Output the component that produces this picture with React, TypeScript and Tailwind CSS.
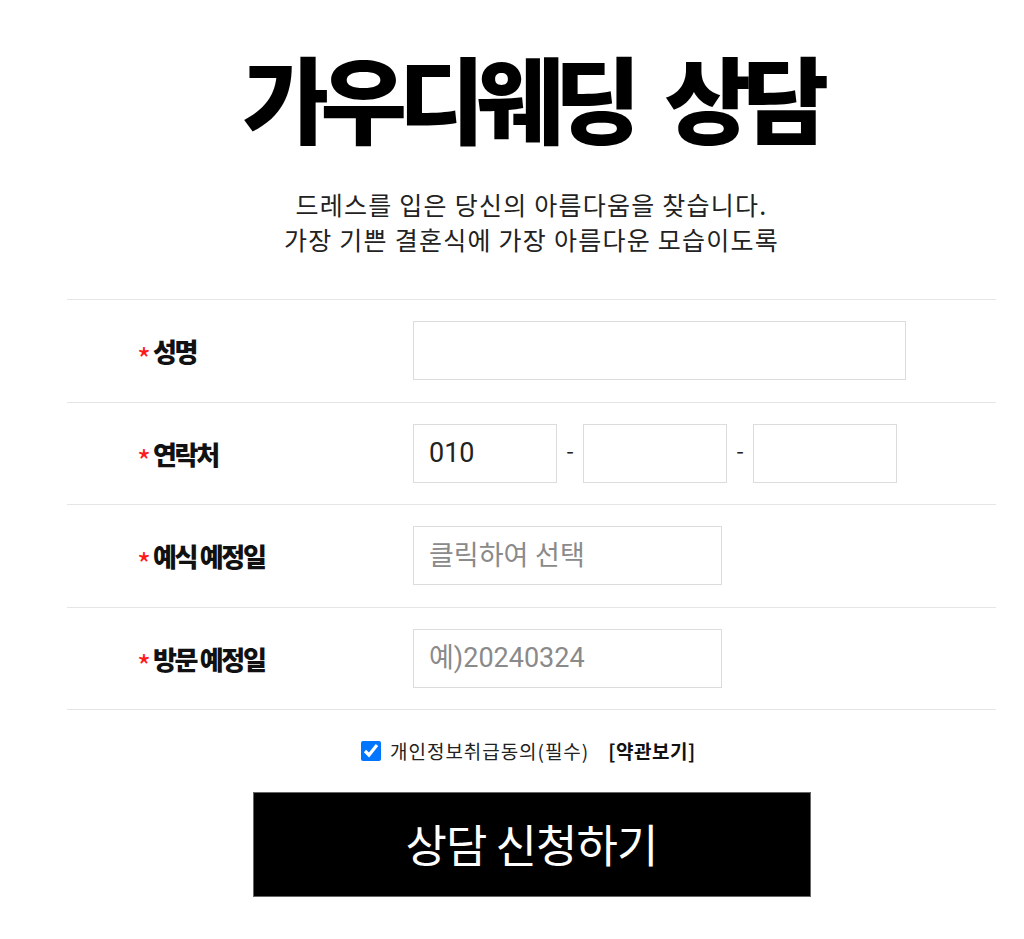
import React from "react";

const KR = { fontFamily: '"Noto Sans CJK KR", "Noto Sans", sans-serif' };
const INPUT_FONT = { fontFamily: 'Roboto, "Noto Sans CJK KR", sans-serif' };

const Label = ({ children }: { children: React.ReactNode }) => (
  <div className="flex items-center pl-[70px] w-[346px] shrink-0">
    <span className="text-[#ff1a1a] text-[30px] mr-[2px] leading-none h-[20px] mt-[4px]">*</span>
    <span className="text-[26px] font-black tracking-[-0.09em] text-[#111]">{children}</span>
  </div>
);

const Row = ({ label, children }: { label: string; children: React.ReactNode }) => (
  <div className="flex items-center h-[102.5px] border-b border-[#e5e5e5]">
    <Label>{label}</Label>
    <div className="flex items-center">{children}</div>
  </div>
);

const inputCls =
  "h-[59px] border border-[#dcdcdc] px-[15px] text-[27px] text-[#222] placeholder:text-[#8a8a8a] outline-none bg-white";

export default function App() {
  return (
    <div className="bg-white min-h-[939px] w-full" style={KR}>
      <div className="ml-[67px] w-[929px]">
        <h1 className="text-center pt-[41px] text-[94px] leading-[110px] font-black tracking-[-0.09em] [word-spacing:0.2em] text-black">
          가우디웨딩 상담
        </h1>
        <p className="text-center mt-[36px] text-[25px] leading-[35px] tracking-[0.05em] text-[#222]">
          드레스를 입은 당신의 아름다움을 찾습니다.
          <br />
          가장 기쁜 결혼식에 가장 아름다운 모습이도록
        </p>

        <div className="mt-[42px] border-t border-[#e5e5e5]">
          <Row label="성명">
            <input className={`${inputCls} w-[493px]`} style={INPUT_FONT} />
          </Row>
          <Row label="연락처">
            <input className={`${inputCls} w-[144px]`} style={INPUT_FONT} defaultValue="010" />
            <span className="w-[26px] text-center text-[22px] text-[#222] mb-[8px]">-</span>
            <input className={`${inputCls} w-[144px]`} style={INPUT_FONT} />
            <span className="w-[26px] text-center text-[22px] text-[#222] mb-[8px]">-</span>
            <input className={`${inputCls} w-[144px]`} style={INPUT_FONT} />
          </Row>
          <Row label="예식 예정일">
            <input className={`${inputCls} w-[309px]`} style={INPUT_FONT} placeholder="클릭하여 선택" />
          </Row>
          <Row label="방문 예정일">
            <input className={`${inputCls} w-[309px]`} style={INPUT_FONT} placeholder="예)20240324" />
          </Row>
        </div>

        <div className="flex items-center justify-center mt-[27px] pr-[6px]">
          <input type="checkbox" defaultChecked className="w-[20px] h-[20px] m-0 accent-[#0075ff]" />
          <span className="ml-[9px] text-[19px] tracking-[0.05em] text-[#222]">개인정보취급동의(필수)</span>
          <span className="ml-[19px] text-[19px] tracking-[0.03em] font-bold text-[#111]">[약관보기]</span>
        </div>

        <div className="flex justify-center mt-[26px]">
          <button className="w-[558px] h-[105px] bg-black text-white text-[45px] border border-[#666] tracking-[-0.02em]">
            상담 신청하기
          </button>
        </div>
      </div>
    </div>
  );
}
